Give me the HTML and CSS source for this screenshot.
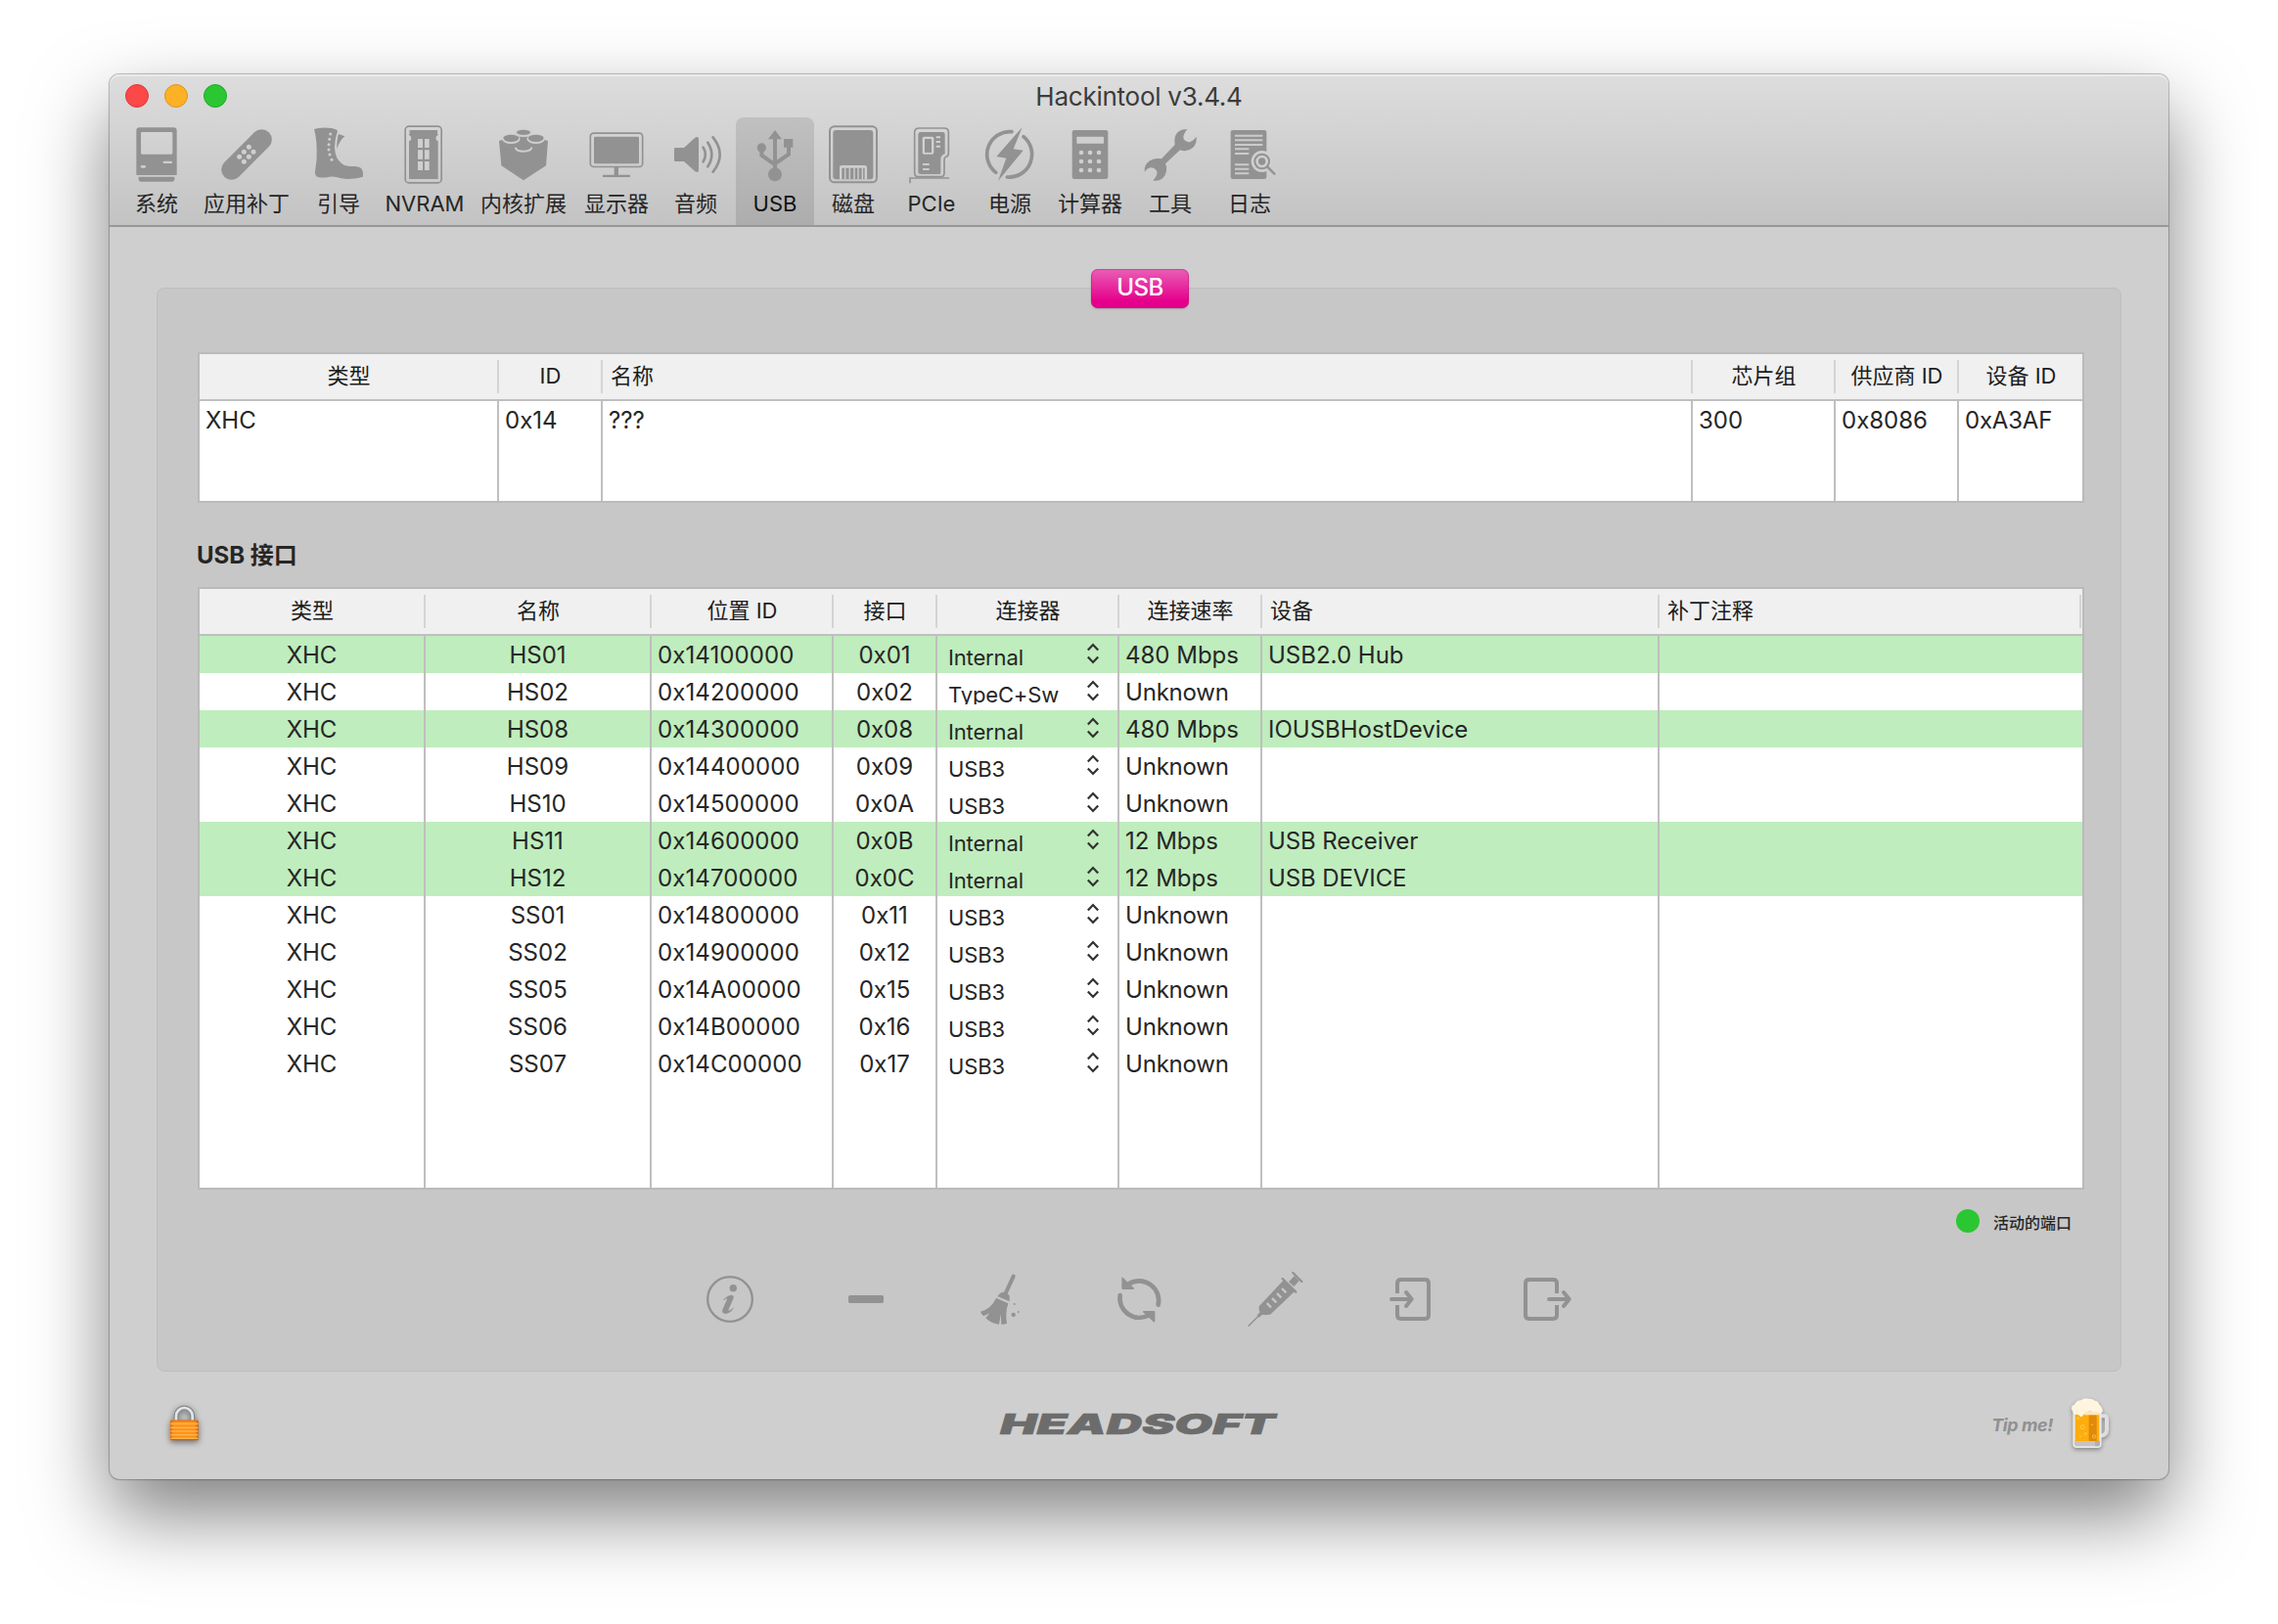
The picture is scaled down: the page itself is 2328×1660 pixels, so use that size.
FILE: index.html
```html
<!DOCTYPE html>
<html lang="zh-CN">
<head>
<meta charset="utf-8">
<title>Hackintool v3.4.4</title>
<link rel="stylesheet" href="styles.css">
</head>
<body>
<svg class="defs" width="0" height="0">
  <symbol id="stepper" viewBox="0 0 14 22"><path d="M1.8 7.6 7 2l5.2 5.6M1.8 14.4 7 20l5.2-5.6"/></symbol>
</svg>
<main class="window">
  <header class="toolbar">
    <div class="titlebar">
      <div class="lights"><i class="light red"></i><i class="light yellow"></i><i class="light green"></i></div>
      <h1 class="title">Hackintool v3.4.4</h1>
    </div>
    <nav class="tools">
      <a class="tool"><svg viewBox="84 198 192 192"><path fill-rule="evenodd" d="M128 211H232Q242 211 242 221V357H118V221Q118 211 128 211ZM136 225Q132 225 132 229V289Q132 293 136 293H225Q229 293 229 289V229Q229 225 225 225ZM203 314a3.500 3.500 0 0 0 0 7H225a3.500 3.500 0 0 0 0-7ZM135 327a4 4 0 0 0 0 8H143a4 4 0 0 0 0-8Z"/><path d="M125 362H235V370Q235 377 228 377H132Q125 377 125 370Z"/></svg><span>系统</span></a>
      <a class="tool"><svg viewBox="360 198 192 192"><path class="line" stroke-width="63" stroke-linecap="round" d="M410 340 502 248"/><g class="cut"><circle cx="463" cy="271" r="7.500"/><circle cx="448" cy="286" r="7.500"/><circle cx="477" cy="286" r="7.500"/><circle cx="434" cy="301" r="7.500"/><circle cx="463" cy="301" r="7.500"/><circle cx="448" cy="316" r="7.500"/></g></svg><span>应用补丁</span></a>
      <a class="tool"><svg viewBox="642 198 192 192"><path d="M663 216Q680 210 706 212Q728 213 735 221Q726 246 726 272Q727 306 748 322Q758 331 780 330Q801 328 809 338Q815 347 813 362Q792 369 764 369Q745 368 731 363Q717 360 706 363Q690 367 672 362Q665 358 666 345Q673 310 671 275Q670 240 663 216Z"/><path d="M738 231 757 238Q742 250 733 276Q732 248 738 231Z"/><g class="cut"><circle cx="713" cy="231" r="4.500"/><circle cx="710" cy="247" r="4.500"/><circle cx="708" cy="263" r="4.500"/><circle cx="708" cy="279" r="4.500"/><circle cx="711" cy="294" r="4.500"/><circle cx="717" cy="310" r="4.500"/></g></svg><span>引导</span></a>
      <a class="tool"><svg viewBox="906 198 192 192"><rect class="line" stroke-width="5" x="942.500" y="207.500" width="111" height="173" rx="11"/><path d="M954 219H1043V234A10 10 0 0 0 1043 253V369H954V253A10 10 0 0 0 954 234Z"/><path class="cut" d="M981 246h15v27h-15zM1002 246h14v27h-14zM981 280h15v28h-15zM1002 280h14v28h-14zM981 315h15v27h-15zM1002 315h14v27h-14z"/><path class="cut" d="M951 216h5v15h-5zM1041 216h5v15h-5z"/></svg><span>NVRAM</span></a>
      <a class="tool"><svg viewBox="69 198 192 192"><path d="M90 252 135 238 165 234 195 238 240 252 234 328 165 373 97 328Z"/><g class="rim"><ellipse cx="165" cy="228" rx="24" ry="9"/><ellipse cx="127" cy="246" rx="25" ry="12"/><ellipse cx="203" cy="246" rx="25" ry="12"/><path d="M140 272Q143 284 165 284Q188 284 190 272"/></g><ellipse cx="165" cy="226" rx="21" ry="8"/><ellipse cx="127" cy="243" rx="24" ry="10"/><ellipse cx="203" cy="243" rx="24" ry="10"/></svg><span>内核扩展</span></a>
      <a class="tool"><svg viewBox="354 198 192 192"><rect class="line" stroke-width="5" x="370" y="228.500" width="160" height="103" rx="10"/><rect x="381" y="239" width="138" height="83" rx="4"/><path d="M443 333h13v23h36v7h-84v-7h35z"/></svg><span>显示器</span></a>
      <a class="tool"><svg viewBox="597 198 192 192"><path d="M631 273H657L691 242Q702 236 702 246V342Q702 352 691 346L657 315H631Q627 315 627 311V277Q627 273 631 273Z"/><path class="line" stroke-width="8" stroke-linecap="round" d="M716 272Q729 294 716 316M730 257Q754 294 730 331M746 241Q788 294 746 347"/></svg><span>音频</span></a>
      <a class="tool selected"><svg viewBox="840 198 192 192"><path d="M936 219 957 247H915ZM963 246h28v26h-28z"/><circle cx="936" cy="355" r="21"/><circle cx="895" cy="273" r="14"/><path class="line" stroke-width="12" d="M936 240V345M895 280V296L936 325M978 268V293L936 322"/></svg><span>USB</span></a>
      <a class="tool"><svg viewBox="1080 198 192 192"><rect class="line" stroke-width="6" x="1104" y="208" width="144" height="171" rx="14"/><rect x="1114" y="219" width="123" height="151" rx="9"/><path class="cut" fill-rule="evenodd" d="M1134 370V334Q1134 327 1141 327H1211Q1218 327 1218 334V370H1211V335H1141V370Z"/><path class="cutline" stroke-width="4.500" d="M1151 335V369M1165 335V369M1179 335V369M1191 335V369M1204 335V369"/></svg><span>磁盘</span></a>
      <a class="tool"><svg viewBox="120 198 192 192"><path class="line" stroke-width="5" d="M178 213H255Q268 213 268 226V290Q268 298 260 301Q255 303 255 310V350Q255 362 243 362H178Q164 362 164 350V226Q164 213 178 213Z"/><path fill-rule="evenodd" d="M183 225H250Q257 225 257 232V292Q244 296 244 308V350Q244 354 240 354H183Q175 354 175 346V233Q175 225 183 225ZM193 239Q188 239 188 244V288Q188 293 193 293H218Q223 293 223 288V244Q223 239 218 239ZM195 246H216V287H195ZM230 238V244H243V238ZM230 252V258H243V252ZM230 266V272H243V266ZM189 321V327H209V321ZM189 336V342H209V336Z"/><path d="M195 246H216V287H195Z"/><path class="line" stroke-width="5" d="M150 382V366H270"/></svg><span>PCIe</span></a>
      <a class="tool"><svg viewBox="360 198 192 192"><path class="line" stroke-width="11" stroke-linecap="round" d="M462 224A70 70 0 0 0 413 349M498 239A70 70 0 0 1 448 363"/><path d="M494 210 467 277 497 281 420 375 445 305 415 300Z"/></svg><span>电源</span></a>
      <a class="tool"><svg viewBox="606 198 192 192"><rect x="647" y="219" width="110" height="150" rx="7"/><g class="cut"><rect x="661" y="239" width="83" height="21" rx="2"/><circle cx="675" cy="288" r="7"/><circle cx="702" cy="288" r="7"/><circle cx="729" cy="288" r="7"/><circle cx="675" cy="315" r="7"/><circle cx="702" cy="315" r="7"/><circle cx="729" cy="315" r="7"/><circle cx="675" cy="342" r="7"/><circle cx="702" cy="342" r="7"/><circle cx="729" cy="342" r="7"/></g></svg><span>计算器</span></a>
      <a class="tool"><svg viewBox="852 198 192 192"><path d="M1000 216Q962 216 961 252L962 264L921 307Q902 303 885 313Q866 327 869 347L877 338Q887 330 898 336Q909 342 907 354Q905 363 895 374Q930 377 936 345Q938 332 933 322L978 280Q1000 288 1017 273Q1030 260 1028 239Q1020 251 1009 255Q996 258 989 247Q984 236 1000 216Z"/></svg><span>工具</span></a>
      <a class="tool"><svg viewBox="1095 198 192 192"><rect x="1133" y="219" width="110" height="150" rx="7"/><path class="cutline" stroke-width="6" d="M1146 236H1231M1146 250H1231M1146 264H1231M1146 277H1189M1146 291H1189M1146 325H1189M1146 338H1189M1146 352H1189"/><circle class="cut" cx="1229" cy="315" r="33"/><path class="cutline" stroke-width="18" d="M1245 331 1256 342"/><circle class="line" stroke-width="6" cx="1229" cy="315" r="22"/><circle cx="1229" cy="315" r="11"/><path class="line" stroke-width="7" stroke-linecap="round" d="M1246 332 1267 353"/></svg><span>日志</span></a>
    </nav>
  </header>

  <section class="panel">
    <div class="tab">USB</div>

    <div class="table controllers">
      <div class="row head"><b class="c">类型</b><b class="c">ID</b><b>名称</b><b class="c">芯片组</b><b class="c">供应商 ID</b><b class="c">设备 ID</b></div>
      <div class="row fill"><span>XHC</span><span>0x14</span><span>???</span><span>300</span><span>0x8086</span><span class="tight">0xA3AF</span></div>
    </div>

    <h2 class="section-title">USB 接口</h2>

    <div class="table ports">
      <div class="row head"><b class="c">类型</b><b class="c">名称</b><b class="c">位置 ID</b><b class="c">接口</b><b class="c">连接器</b><b class="c">连接速率</b><b>设备</b><b class="last">补丁注释</b></div>
      <div class="row active"><span class="c">XHC</span><span class="c">HS01</span><span class="loc">0x14100000</span><span class="c">0x01</span><span class="pick"><em>Internal</em><svg><use href="#stepper"/></svg></span><span>480 Mbps</span><span>USB2.0 Hub</span><span></span></div>
      <div class="row"><span class="c">XHC</span><span class="c">HS02</span><span class="loc">0x14200000</span><span class="c">0x02</span><span class="pick"><em>TypeC+Sw</em><svg><use href="#stepper"/></svg></span><span class="tight">Unknown</span><span></span><span></span></div>
      <div class="row active"><span class="c">XHC</span><span class="c">HS08</span><span class="loc">0x14300000</span><span class="c">0x08</span><span class="pick"><em>Internal</em><svg><use href="#stepper"/></svg></span><span>480 Mbps</span><span>IOUSBHostDevice</span><span></span></div>
      <div class="row"><span class="c">XHC</span><span class="c">HS09</span><span class="loc">0x14400000</span><span class="c">0x09</span><span class="pick"><em>USB3</em><svg><use href="#stepper"/></svg></span><span class="tight">Unknown</span><span></span><span></span></div>
      <div class="row"><span class="c">XHC</span><span class="c">HS10</span><span class="loc">0x14500000</span><span class="c">0x0A</span><span class="pick"><em>USB3</em><svg><use href="#stepper"/></svg></span><span class="tight">Unknown</span><span></span><span></span></div>
      <div class="row active"><span class="c">XHC</span><span class="c">HS11</span><span class="loc">0x14600000</span><span class="c">0x0B</span><span class="pick"><em>Internal</em><svg><use href="#stepper"/></svg></span><span>12 Mbps</span><span class="name">USB Receiver</span><span></span></div>
      <div class="row active"><span class="c">XHC</span><span class="c">HS12</span><span class="loc">0x14700000</span><span class="c">0x0C</span><span class="pick"><em>Internal</em><svg><use href="#stepper"/></svg></span><span>12 Mbps</span><span class="name">USB DEVICE</span><span></span></div>
      <div class="row"><span class="c">XHC</span><span class="c">SS01</span><span class="loc">0x14800000</span><span class="c">0x11</span><span class="pick"><em>USB3</em><svg><use href="#stepper"/></svg></span><span class="tight">Unknown</span><span></span><span></span></div>
      <div class="row"><span class="c">XHC</span><span class="c">SS02</span><span class="loc">0x14900000</span><span class="c">0x12</span><span class="pick"><em>USB3</em><svg><use href="#stepper"/></svg></span><span class="tight">Unknown</span><span></span><span></span></div>
      <div class="row"><span class="c">XHC</span><span class="c">SS05</span><span class="loc">0x14A00000</span><span class="c">0x15</span><span class="pick"><em>USB3</em><svg><use href="#stepper"/></svg></span><span class="tight">Unknown</span><span></span><span></span></div>
      <div class="row"><span class="c">XHC</span><span class="c">SS06</span><span class="loc">0x14B00000</span><span class="c">0x16</span><span class="pick"><em>USB3</em><svg><use href="#stepper"/></svg></span><span class="tight">Unknown</span><span></span><span></span></div>
      <div class="row"><span class="c">XHC</span><span class="c">SS07</span><span class="loc">0x14C00000</span><span class="c">0x17</span><span class="pick"><em>USB3</em><svg><use href="#stepper"/></svg></span><span class="tight">Unknown</span><span></span><span></span></div>
      <div class="row fill"><span></span><span></span><span></span><span></span><span></span><span></span><span></span><span></span></div>
    </div>

    <div class="legend"><i class="dot"></i><span>活动的端口</span></div>

    <div class="actions">
      <svg viewBox="48 54 180 180"><circle class="line" stroke-width="7" cx="138" cy="144" r="68.500"/><circle cx="148" cy="110" r="11"/><path d="M115 149Q128 132 143 131Q152 132 148 143L134 175Q132 182 139 177L150 169Q142 187 124 189Q111 187 116 173L128 147Q131 138 125 143Z"/></svg>
      <svg viewBox="465 54 180 180"><rect x="501" y="132" width="108" height="24" rx="5"/></svg>
      <svg viewBox="883 54 180 180"><path class="line" stroke-width="12" stroke-linecap="round" d="M1008 74 984 126"/><path d="M959 135Q968 121 981 122Q994 127 996 135L996 151ZM955 140 992 157Q982 185 988 218Q980 222 971 221L969 190 964 221Q940 219 923 202L935 187 916 196Q910 190 907 182Q940 174 955 140Z"/><circle cx="1008" cy="192" r="6.500"/><circle cx="1023" cy="183" r="3"/><circle cx="1011" cy="159" r="3"/></svg>
      <svg viewBox="41 54 180 180"><path class="line" stroke-width="14" stroke-linecap="round" d="M100 97A60 60 0 0 1 190 161M73 132A60 60 0 0 0 163 192"/><path d="M78 79Q78 74 82 78L116 110Q117 114 112 114H82Q78 114 78 110ZM180 209Q180 218 175 213L143 184Q142 180 146 180H176Q180 180 180 184Z"/></svg>
      <svg viewBox="458 54 180 180"><path class="line" stroke-width="4" stroke-linecap="round" d="M467 226 500 193"/><path class="line" stroke-width="10" d="M496 197 510 183"/><path d="M575 85 609 119 535 190Q530 194 508 191Q497 184 499 166ZM590 91 607 73 622 88 606 105Z"/><path class="line" stroke-width="7" stroke-linecap="round" d="M571 81 612 122M603 63 630 90"/><path class="cutline" stroke-width="7" d="M523 156 536 169M539 141 552 154M554 126 567 139M569 111 582 124"/></svg>
      <svg viewBox="876 54 180 180"><path class="line" stroke-width="12" d="M924 126V95Q924 84 935 84H1009Q1020 84 1020 95V193Q1020 204 1009 204H935Q924 204 924 193V162"/><path class="line" stroke-width="12" stroke-linecap="round" stroke-linejoin="round" d="M906 144H966M951 123 968 144 951 165"/></svg>
      <svg viewBox="1293 54 180 180"><path class="line" stroke-width="12" d="M1413 126V95Q1413 84 1402 84H1328Q1317 84 1317 95V193Q1317 204 1328 204H1402Q1413 204 1413 193V162"/><path class="line" stroke-width="12" stroke-linecap="round" stroke-linejoin="round" d="M1389 144H1449M1434 123 1451 144 1434 165"/></svg>
    </div>
  </section>

  <footer class="footer">
    <svg class="lock" viewBox="60 165 108 126">
      <defs>
        <linearGradient id="brass"><stop offset="0" stop-color="#d9640a"/><stop offset=".12" stop-color="#ff8f12"/><stop offset=".88" stop-color="#ff8f12"/><stop offset="1" stop-color="#c9560a"/></linearGradient>
      </defs>
      <path class="shackle-edge" d="M90 220V202A25 25 0 0 1 140 202V220"/>
      <path class="shackle" d="M90 220V202A25 25 0 0 1 140 202V220"/>
      <rect x="72" y="215" width="86" height="61" rx="3" fill="url(#brass)"/>
      <path class="ribs" d="M73 226H157M73 238H157M73 249H157M73 260H157M73 271H157"/>
      <path class="lock-top" d="M73 216.500H157"/>
      <path class="lock-base" d="M73 275H157"/>
    </svg>
    <svg class="brand" viewBox="0 0 288 28"><text x="1" y="24" textLength="281" lengthAdjust="spacingAndGlyphs">HEADSOFT</text></svg>
    <div class="tip">
      <span>Tip me!</span>
      <svg class="beer" viewBox="465 650 135 180">
        <path class="handle" d="M564 714H574Q582 714 582 724V756Q582 774 562 775"/>
        <path class="glass" d="M478 700H566V800Q566 812 554 812H490Q478 812 478 800Z"/>
        <path fill="#c4c4c4" d="M483 790H561V800Q561 807 553 807H491Q483 807 483 800Z"/>
        <path fill="#b0b0b0" d="M546 790H561V800Q561 807 553 807H546Z"/>
        <path fill="#ffad0d" d="M485 708H559V791H485Z"/>
        <path fill="#e0890a" d="M527 708H551V791H527Z"/>
        <path fill="#fbe6bd" d="M512 700H559V711H512Z"/>
        <path fill="#fff4df" d="M478 701Q470 690 477 682Q484 680 486 674Q491 665 503 666Q512 657 527 661Q538 660 545 667Q556 667 559 679Q568 685 570 699Q565 710 557 704Q550 698 542 703Q530 697 522 702Q514 701 510 711Q504 722 498 712Q492 708 484 710Z"/>
        <g class="bubbles"><circle cx="508" cy="748" r="6"/><circle cx="517" cy="769" r="3.500"/><circle cx="543" cy="777" r="5"/><circle cx="537" cy="741" r="1.500"/><circle cx="501" cy="777" r="1.500"/><circle cx="494" cy="722" r="2"/></g>
      </svg>
    </div>
  </footer>
</main>
</body>
</html>
```
FILE: styles.css
```css
* { box-sizing: border-box; }

body {
  margin: 0;
  width: 2328px;
  height: 1660px;
  padding: 76px 112px 0;
  overflow: hidden;
  background: #fff;
  color: #262626;
  font-family: Inter, "Noto Sans CJK SC", sans-serif;
  font-size: 24px;
}

.defs { position: absolute; }

svg { display: block; fill: #929292; }
.line { fill: none; stroke: #929292; }
.cut { fill: #cfcfcf; }
.cutline { fill: none; stroke: #cbcbcb; }

.window {
  display: flex;
  flex-direction: column;
  width: 2104px;
  height: 1436px;
  border-radius: 10px;
  background: #cfcfcf;
  box-shadow: 0 0 1px 1px rgba(0, 0, 0, .25), 0 36px 80px rgba(0, 0, 0, .5);
}

/* toolbar */
.toolbar {
  height: 156px;
  border-bottom: 2px solid #989898;
  border-radius: 10px 10px 0 0;
  background: linear-gradient(#dddddd, #c3c3c3);
  box-shadow: inset 0 2px #ebebeb;
}
.titlebar {
  display: grid;
  grid-template-columns: 1fr auto 1fr;
  align-items: center;
  height: 44px;
  padding: 0 16px;
}
.lights { display: flex; gap: 16px; }
.light { width: 24px; height: 24px; border-radius: 50%; }
.red { background: #fc4848; border: 1px solid #e0383c; }
.yellow { background: #fdb124; border: 1px solid #de9420; }
.green { background: #2bc732; border: 1px solid #21a82b; }
.title { margin: 1px 0 0; font-size: 26px; font-weight: 400; letter-spacing: -.25px; color: #3c3c3c; }

.tools {
  display: grid;
  grid-template-columns: 80px 104px 84px 92px 110px 80px 82px 80px 80px 80px 80px 84px 80px 82px;
  height: 110px;
  padding-left: 8px;
}
.tool {
  display: flex;
  flex-direction: column;
  align-items: center;
  padding-top: 6px;
  font-size: 22px;
  white-space: nowrap;
}
.tool svg { width: 64px; height: 64px; }
.tool span { line-height: 32px; margin-top: 2px; }
.tool.selected {
  border-radius: 8px 8px 0 0;
  background: linear-gradient(#c0c0c0, #adadad);
  color: #111;
}

/* panel */
.panel {
  display: flex;
  flex-direction: column;
  width: 2008px;
  height: 1108px;
  margin: 62px 48px 0;
  padding: 0 38px 0 41px;
  border: 1px solid #bebebe;
  border-radius: 8px;
  background: #c7c7c7;
}
.tab {
  display: flex;
  align-items: center;
  justify-content: center;
  align-self: center;
  width: 100px;
  height: 40px;
  margin: -20px 1px 45px 0;
  padding-bottom: 3px;
  border-radius: 7px;
  background: linear-gradient(#ea5fb6, #e5008c 82%);
  box-shadow: inset 0 0 0 1px rgba(190, 20, 120, .45), 0 1px 2px rgba(0, 0, 0, .2);
  color: #fff;
  font-weight: 500;
  letter-spacing: -.5px;
}

.table {
  display: flex;
  flex-direction: column;
  width: 1928px;
  border: 2px solid #bababa;
  background: #fff;
}
.controllers { height: 154px; }
.controllers .row { grid-template-columns: 306px 106px 1114px 146px 126px 126px; }
.ports { height: 616px; }
.ports .row { grid-template-columns: 231px 231px 186px 106px 186px 146px 406px 432px; }

.row { display: grid; height: 38px; line-height: 40px; white-space: nowrap; }
.row > span { padding-left: 6px; border-right: 2px solid #bfbfbf; }
.row > span:last-child { border-right: 0; }
.row > .c { padding-left: 0; text-align: center; }
.row > .loc { letter-spacing: .1px; }
.row > .tight { letter-spacing: -.2px; }
.row > .name { letter-spacing: -.1px; }
.row.active { background: #bfedbd; }
.row.fill { flex: 1; height: auto; }
.row.head {
  height: 48px;
  flex: none;
  padding: 6px 0;
  border-bottom: 2px solid #bfbfbf;
  background: #f0f0f0;
  color: #1c1c1c;
  font-size: 22px;
  line-height: 32px;
}
.row.head b { height: 34px; padding-left: 8px; border-right: 2px solid #d4d4d4; font-weight: 400; }
.row.head b.c { padding-left: 1px; }
.row.head b:last-child { border-right: 0; }
.row.head b.last { margin-right: 1px; border-right: 2px solid #d4d4d4; }

.pick { display: flex; justify-content: space-between; height: 38px; }
.row > .pick { padding: 0 18px 0 11px; }
.pick em {
  height: 32px;
  padding-top: 12px;
  overflow: hidden;
  font-style: normal;
  font-size: 22px;
  line-height: 20px;
  letter-spacing: -.15px;
}
.pick svg { width: 14px; height: 22px; margin-top: 7px; fill: none; stroke: #333; stroke-width: 2.2; }

.section-title { margin: 36px 0 14px -1px; font-size: 24px; line-height: 36px; font-weight: 700; }

.legend {
  display: flex;
  align-items: center;
  align-self: flex-end;
  gap: 14px;
  height: 24px;
  margin: 20px 12px 0 0;
  font-size: 16px;
  font-weight: 500;
}
.legend span { padding-top: 2px; }
.dot { width: 24px; height: 24px; border-radius: 50%; background: #2bc732; }

.actions { display: flex; justify-content: center; gap: 79.170px; margin: 38px 4px 0 0; }
.actions svg { width: 60px; height: 60px; }
.actions .cutline { stroke: #c7c7c7; }
.rim { fill: none; stroke: #cfcfcf; stroke-width: 6; }

/* footer */
.footer {
  display: grid;
  grid-template-columns: 1fr auto 1fr;
  align-items: center;
  height: 108px;
  padding: 0 57px 0 58px;
}
.lock { width: 36px; height: 42px; filter: drop-shadow(0 2px 3px rgba(0, 0, 0, .5)); }
.shackle-edge { fill: none; stroke: #7f8487; stroke-width: 14; }
.shackle { fill: none; stroke: #e2e6e8; stroke-width: 8; }
.ribs { stroke: #ffb14d; stroke-width: 5; }
.lock-top { stroke: #e0700f; stroke-width: 3; }
.lock-base { stroke: #c4560c; stroke-width: 3; }
.brand { width: 288px; height: 28px; }
.brand text { font: italic 900 29px Inter, sans-serif; fill: #6c6c6c; stroke: #6c6c6c; stroke-width: .6; }
.tip {
  display: flex;
  align-items: center;
  justify-content: flex-end;
  gap: 16px;
  color: #919191;
  font-size: 18px;
  font-style: italic;
  font-weight: 700;
  letter-spacing: -.4px;
}
.beer { width: 45px; height: 60px; filter: drop-shadow(0 2px 2px rgba(0, 0, 0, .35)); }
.handle { fill: none; stroke: #dedede; stroke-width: 12; }
.glass { fill: #e8e8e8; }
.bubbles { fill: none; stroke: #ffd573; stroke-width: 2; }
```
